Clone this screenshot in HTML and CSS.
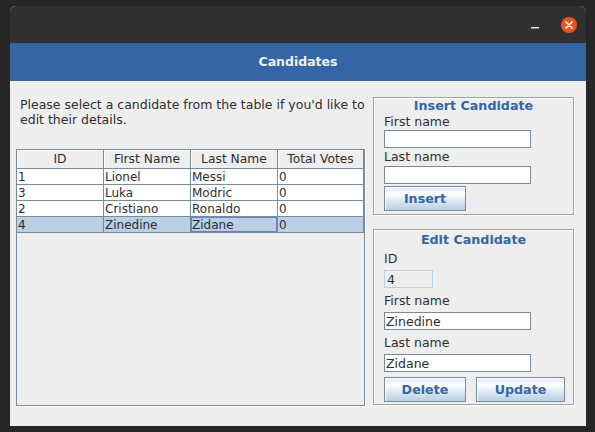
FILE: index.html
```html
<!DOCTYPE html>
<html>
<head>
<meta charset="utf-8">
<title>Candidates</title>
<link rel="stylesheet" href="styles.css">
</head>
<body>
<div class="window">
  <div class="titlebar">
    <svg class="tb-icon" width="16" height="16" viewBox="0 0 16 16"><rect x="4" y="10" width="8" height="1.5" fill="#e6e6e6"/></svg>
    <svg class="tb-icon" width="16" height="16" viewBox="0 0 16 16"><circle cx="8" cy="8" r="8" fill="#e95420"/><path d="M5 5 L11 11 M11 5 L5 11" stroke="#fff" stroke-width="1.5" stroke-linecap="round"/></svg>
  </div>
  <div class="header">Candidates</div>
  <div class="content">
    <div class="left">
      <p class="intro">Please select a candidate from the table if you'd like to<br>edit their details.</p>
      <div class="table-pane">
        <div class="trow thead">
          <div class="th">ID</div>
          <div class="th">First Name</div>
          <div class="th">Last Name</div>
          <div class="th">Total Votes</div>
        </div>
        <div class="trow">
          <div class="td">1</div><div class="td">Lionel</div><div class="td">Messi</div><div class="td">0</div>
        </div>
        <div class="trow">
          <div class="td">3</div><div class="td">Luka</div><div class="td">Modric</div><div class="td">0</div>
        </div>
        <div class="trow">
          <div class="td">2</div><div class="td">Cristiano</div><div class="td">Ronaldo</div><div class="td">0</div>
        </div>
        <div class="trow selected">
          <div class="td">4</div><div class="td">Zinedine</div><div class="td focus">Zidane</div><div class="td">0</div>
        </div>
      </div>
    </div>
    <div class="right">
      <section class="panel insert">
        <div class="panel-title">Insert Candidate</div>
        <div class="label">First name</div>
        <input class="field" type="text" value="">
        <div class="label gap1">Last name</div>
        <input class="field gap1" type="text" value="">
        <button class="btn insert-btn">Insert</button>
      </section>
      <section class="panel edit">
        <div class="panel-title">Edit Candidate</div>
        <div class="label gap3">ID</div>
        <input class="field id-field gap3" type="text" value="4" readonly>
        <div class="label gap5">First name</div>
        <input class="field gap3" type="text" value="Zinedine">
        <div class="label gap5">Last name</div>
        <input class="field gap3" type="text" value="Zidane">
        <div class="btn-row">
          <button class="btn">Delete</button>
          <button class="btn update-btn">Update</button>
        </div>
      </section>
    </div>
  </div>
</div>
</body>
</html>
```
FILE: styles.css
```css
html, body {
  margin: 0;
  padding: 0;
}
body {
  width: 595px;
  height: 432px;
  overflow: hidden;
  background: #262626;
  font-family: "DejaVu Sans", sans-serif;
}
.window {
  margin: 6px 0 0 10px;
  width: 576px;
  height: 420px;
  display: flex;
  flex-direction: column;
  border-radius: 6px 6px 0 0;
  overflow: hidden;
  background: #eeeeee;
}
.titlebar {
  height: 37px;
  flex: none;
  background: #303030;
  display: flex;
  align-items: center;
  justify-content: flex-end;
  gap: 18px;
  padding-right: 9px;
  box-sizing: border-box;
}
.tb-icon {
  display: block;
}
.header {
  height: 38px;
  flex: none;
  background: #3465a4;
  color: #eeeeee;
  font-weight: bold;
  font-size: 12.5px;
  line-height: 38px;
  text-align: center;
}
.content {
  flex: 1;
  display: grid;
  grid-template-columns: 349px 201px;
  column-gap: 8px;
  padding: 16px 0 20px 6px;
  min-height: 0;
}
.left {
  display: flex;
  flex-direction: column;
  min-height: 0;
}
.intro {
  margin: 0;
  padding-left: 4px;
  font-size: 12.5px;
  line-height: 15px;
  color: #2e2e2e;
  white-space: nowrap;
}
.table-pane {
  margin-top: 22px;
  flex: 1;
  border: 1px solid #7a8a99;
  box-shadow: 1px 1px 0 #ffffff;
  background: #eeeeee;
}
.trow {
  display: grid;
  grid-template-columns: 87px 87px 87px 86px;
}
.th {
  height: 19px;
  box-sizing: border-box;
  padding-top: 1px;
  border-right: 1px solid #7a8a99;
  border-bottom: 1px solid #7a8a99;
  box-shadow: inset 1px 1px 0 #ffffff;
  background: #eeeeee;
  font-size: 12.3px;
  line-height: 17px;
  text-align: center;
  color: #2e2e2e;
}
.td {
  height: 16px;
  box-sizing: border-box;
  padding: 1px 0 0 1px;
  border-right: 1px solid #7a8a99;
  border-bottom: 1px solid #7a8a99;
  background: #ffffff;
  font-size: 12px;
  line-height: 14px;
  color: #2e2e2e;
  white-space: nowrap;
}
.trow.selected .td {
  background: #b8cfe5;
}
.td.focus {
  box-shadow: inset 0 0 0 1px #6382bf;
}
.right {
  display: flex;
  flex-direction: column;
  gap: 14px;
}
.panel {
  box-sizing: border-box;
  border: 1px solid #a0a0a0;
  box-shadow: inset 1px 1px 0 #ffffff, 1px 1px 0 #ffffff;
  padding: 0 0 0 10px;
  display: flex;
  flex-direction: column;
  align-items: flex-start;
}
.panel.insert {
  height: 118px;
}
.panel.edit {
  height: 176px;
  padding-top: 2px;
}
.panel-title {
  align-self: stretch;
  margin-left: -10px;
  text-align: center;
  font-weight: bold;
  font-size: 12.7px;
  line-height: 16px;
  color: #3465a4;
}
.label {
  font-size: 12.5px;
  line-height: 16px;
  color: #2e2e2e;
}
.field {
  display: block;
  margin: 0;
  width: 147px;
  height: 18px;
  box-sizing: border-box;
  border: 1px solid #7a8a99;
  background: #ffffff;
  padding: 0 1px;
  font-family: "DejaVu Sans", sans-serif;
  font-size: 12.5px;
  color: #2e2e2e;
  outline: none;
}
.field.id-field {
  width: 49px;
  background: #eeeeee;
  border-color: #b8cfe5;
  padding-left: 2px;
}
.gap1 { margin-top: 1px; }
.gap3 { margin-top: 3px; }
.gap5 { margin-top: 5px; }
.btn {
  width: 82px;
  height: 25px;
  box-sizing: border-box;
  margin: 0;
  padding: 0;
  border: 1px solid #7a8a99;
  box-shadow: inset 1px 1px 0 #ffffff;
  background: linear-gradient(to bottom, #dde8f3 0%, #ffffff 30%, #dde8f3 60%, #b8cfe5 100%);
  font-family: "DejaVu Sans", sans-serif;
  font-weight: bold;
  font-size: 12.7px;
  color: #3465a4;
}
.insert-btn {
  margin-top: 2px;
}
.btn-row {
  margin-top: 5px;
  display: flex;
  gap: 10px;
}
.update-btn {
  width: 89px;
}
```
